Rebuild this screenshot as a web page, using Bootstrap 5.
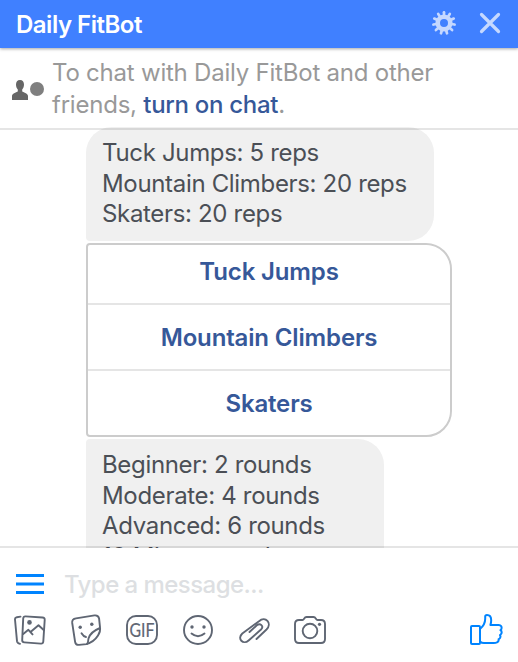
<!DOCTYPE html>
<html lang="en">
<head>
  <meta charset="UTF-8" />
  <meta name="viewport" content="width=device-width, initial-scale=1.0" />
  <title>Daily FitBot</title>
  <link href="https://cdn.jsdelivr.net/npm/bootstrap@5.3.0/dist/css/bootstrap.min.css" rel="stylesheet" />
  <style>
    body { font-family: Inter, "Liberation Sans", sans-serif; font-size: 24px; line-height: 30.67px; color: #4b4f56; background: #fff; }
    svg { display: block; flex-shrink: 0; }
    .chat-window { height: 662px; }
    .chat-header { height: 48px; padding: 0 17px 0 16px; background: #4080ff; box-shadow: 0 1px 3px rgba(0, 0, 0, .35); z-index: 2; }
    .chat-title { padding-top: 2px; font-size: 24px; font-weight: 600; letter-spacing: -.5px; }
    .header-icons { gap: 23px; padding-bottom: 3px; }
    .chat-notice { height: 82px; padding: 9px 12px 0; color: #999; line-height: 32px; letter-spacing: -.22px; border-bottom: 2px solid rgba(0, 0, 0, .1); z-index: 1; }
    .chat-notice a { color: #365899; font-weight: 500; letter-spacing: -.3px; }
    .messages { margin-top: -3px; padding-left: 86px; gap: 2px; min-height: 0; }
    .bubble { background: #f0f0f0; border-radius: 4px 26px 26px 4px; padding: 11px 16px; letter-spacing: -.33px; white-space: nowrap; flex-shrink: 0; }
    .bubble-first { width: 348px; height: 114px; border-top-left-radius: 26px; }
    .bubble-last { width: 298px; height: 150px; }
    .tight { letter-spacing: -1.3px; }
    .choices { width: 366px; height: 194px; border: 2px solid #ccc; border-radius: 4px 26px 26px 4px; flex-shrink: 0; overflow: hidden; }
    .choices .list-group-item { height: 66px; padding: 0; border: 0; border-top: 2px solid #e5e5e5; line-height: 66px; font-weight: 600; letter-spacing: -.15px; color: #365899; background: #fff; }
    .choices .list-group-item:first-child { height: 58px; border-top: 0; line-height: 54px; }
    .composer { height: 116px; margin-top: -2px; border-top: 2px solid rgba(0, 0, 0, .1); z-index: 1; }
    .composer-fill { background: #fff; height: 114px; padding: 20px 14px 0; }
    .message-input { margin-left: 18px; font-size: 24px; font-weight: 500; line-height: 32px; height: 32px; padding: 2px 0 0; color: #4b4f56; letter-spacing: -.55px; }
    .message-input::placeholder { color: #dddfe2; opacity: 1; }
    .tools { gap: 24px; margin-top: 12px; }
    .like-icon { margin-right: 1px; }
    .tool-icon { fill: none; stroke: #5f6673; stroke-width: 1.9; stroke-linecap: round; stroke-linejoin: round; }
  </style>
</head>
<body>
  <div class="chat-window d-flex flex-column overflow-hidden">
    <header class="chat-header d-flex align-items-center justify-content-between text-white position-relative flex-shrink-0">
      <span class="chat-title">Daily FitBot</span>
      <div class="header-icons d-flex align-items-center">
        <svg width="24" height="24" viewBox="-12 -12 24 24" id="gear"></svg>
        <svg width="22" height="22" viewBox="0 0 22 22"><path d="M2.500 2.500l17 17M19.500 2.500l-17 17" stroke="#c5d8ff" stroke-width="3.200" stroke-linecap="round" /></svg>
      </div>
    </header>

    <div class="chat-notice d-flex position-relative flex-shrink-0">
      <svg width="40" height="32" viewBox="0 0 40 32" class="mt-3">
        <path d="M8 7c2.700 0 4 1.900 4 4.500 0 2.200-.8 3.900-1.800 4.900v1.800c.6 1.300 5.800 1.700 5.800 4.800v4H0v-4c0-3.100 5.200-3.500 5.800-4.800v-1.800C4.800 15.400 4 13.700 4 11.500 4 8.900 5.300 7 8 7z" fill="#666" />
        <circle cx="25" cy="16" r="7" fill="#7f7f7f" />
      </svg>
      <div>To chat with Daily FitBot and other<br>friends, <a href="#" class="text-decoration-none">turn on chat</a>.</div>
    </div>

    <main class="messages d-flex flex-column flex-grow-1 overflow-hidden">
      <div class="bubble bubble-first">Tuck Jumps: 5 reps<br>Mountain Climbers: 20 reps<br>Skaters: 20 reps</div>
      <div class="choices list-group text-center">
        <a href="#" class="list-group-item">Tuck Jumps</a>
        <a href="#" class="list-group-item">Mountain Climbers</a>
        <a href="#" class="list-group-item">Skaters</a>
      </div>
      <div class="bubble bubble-last">Beginner: 2 rounds<br>Moderate: 4 rounds<br>Advanced: 6 rounds<br>10 Mi<span class="tight">nute rounds</span></div>
    </main>

    <footer class="composer position-relative flex-shrink-0">
      <div class="composer-fill">
        <div class="d-flex align-items-center">
          <svg width="32" height="32" viewBox="0 0 32 32"><path d="M2 7.500h28M2 16h28M2 24.500h28" stroke="#0084ff" stroke-width="3" /></svg>
          <input type="text" class="message-input form-control border-0 bg-transparent" placeholder="Type a message..." aria-label="Message" />
        </div>
        <div class="tools d-flex align-items-center">
          <svg class="tool-icon" width="32" height="36" viewBox="0 0 32 36">
            <path d="M11.500 4.400l17 1.100q2.400.2 2.200 2.500l-1.400 21.500q-.2 2.300-2.500 2.100l-16.500-1.200q-2.300-.2-2.100-2.500L9.200 6.500q.2-2.200 2.300-2.100z" />
            <path d="M6.500 4.600l-3.700.6Q.8 5.500 1 7.500l2 21.700q.3 2.200 3 2.700M9.200 22l5.200-4.200 4.100 4.600M16.500 20l8-6.800 5.200 4.800" />
            <circle cx="15.500" cy="10.400" r="2.300" fill="#5f6673" stroke="none" />
          </svg>
          <svg class="tool-icon" width="32" height="36" viewBox="0 0 32 36">
            <path d="M6 6.400l18.500-3q4-.4 4.600 3.300l.9 8.500q.7 4.300-2 8.300-3.800 6.200-11.500 8.600l-7.500.8q-3.400.2-3.900-3.100L2.200 10.900q-.4-3.900 3.800-4.500z" />
            <path d="M17 32q1.200-1.500 1.500-5.500 1.800-6.500 11.500-10.500M11.500 21.300q1.800 3.100 4.500 3.700" />
            <g fill="#5f6673" stroke="none"><circle cx="10.200" cy="15.200" r="1.700" /><circle cx="21.800" cy="12.300" r="1.700" /></g>
          </svg>
          <svg class="tool-icon" width="32" height="36" viewBox="0 0 32 36">
            <rect x="1" y="4" width="30" height="28" rx="9" />
            <text x="16" y="24.500" text-anchor="middle" font-family="Lato, sans-serif" font-size="18.500" textLength="25" lengthAdjust="spacingAndGlyphs" fill="#5f6673" stroke="#5f6673" stroke-width=".2">GIF</text>
          </svg>
          <svg class="tool-icon" width="32" height="36" viewBox="0 0 32 36">
            <circle cx="16" cy="18" r="14" /><path d="M9.500 21.500q6.500 5.400 13 0" />
            <g fill="#5f6673" stroke="none"><circle cx="10" cy="15" r="1.700" /><circle cx="22" cy="15" r="1.700" /></g>
          </svg>
          <svg class="tool-icon" width="32" height="36" viewBox="0 0 32 36">
            <path d="M18.500 27l10-9.500c6-6-1-14-7.500-8.300L4.300 21.500c-5.600 5.200.9 11.800 6.300 7L23 17.500c3.200-3.400-.7-7-4.200-4.200L11.500 20" />
          </svg>
          <svg class="tool-icon" width="32" height="36" viewBox="0 0 32 36">
            <path d="M5 8h3.500c1.700 0 1.500-3 4-3h7c2.500 0 2.300 3 4 3H27q4 0 4 4v15q0 4-4 4H5q-4 0-4-4V12q0-4 4-4z" />
            <circle cx="16" cy="19" r="7.300" /><circle cx="25.500" cy="12.300" r="1.600" fill="#5f6673" stroke="none" />
          </svg>
          <svg class="like-icon ms-auto" width="34" height="36" viewBox="0 0 34 36" fill="none" stroke="#0084ff" stroke-width="2" stroke-linejoin="round">
            <rect x="2" y="14" width="9" height="18" rx="1" />
            <path d="M11 17q5.200-4.200 5.200-10.200V4.500q0-1.500 1.800-1.500 4.200 0 4.200 5.300 0 2.200-.8 4.700h8.300q3.400.3 2.800 3.500-.1 1.100-1 1.700 1.800 1.200.8 3.500-.4.900-1.300 1.400 1 1.500-.1 3.100-.5.700-1.300.9.400 2.200-1.500 3.200-1.100.8-3.500.8H15q-2.500 0-4-1.600" />
          </svg>
        </div>
      </div>
    </footer>
  </div>

  <script src="https://cdn.jsdelivr.net/npm/bootstrap@5.3.0/dist/js/bootstrap.bundle.min.js"></script>
  <script>
    // eleven rounded teeth around a ring
    let teeth = '';
    for (let i = 0; i < 11; i++) {
      teeth += `<path d="M0 -7V-10.700" transform="rotate(${i * 360 / 11})" stroke-width="2.700" stroke-linecap="round" />`;
    }
    document.getElementById('gear').innerHTML = `<g stroke="#c5d8ff" fill="none">${teeth}<circle r="6.300" stroke-width="4.600" /></g>`;
  </script>
</body>
</html>
